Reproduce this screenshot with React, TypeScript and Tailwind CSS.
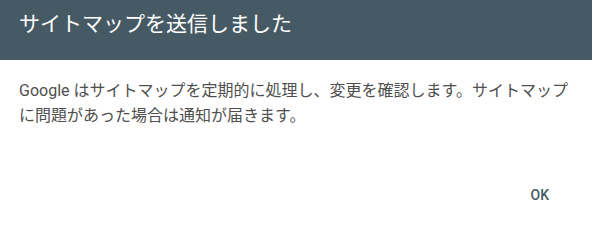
export default function App() {
  return (
    <div
      className="h-[229px] w-[592px] bg-white"
      style={{ fontFamily: 'Roboto, "Noto Sans CJK JP", sans-serif' }}
    >
      <div className="flex h-[60px] items-start bg-[#455a64] px-[19px] pt-[9px]">
        <h1 className="text-[21px] leading-[30px] text-white">サイトマップを送信しました</h1>
      </div>
      <p className="px-[19px] pt-[18px] pr-[20px] text-[16px] leading-[25px] text-[#4f4f4f]">
        Google はサイトマップを定期的に処理し、変更を確認します。サイトマップに問題があった場合は通知が届きます。
      </p>
      <div className="flex justify-end pt-[55px] pr-[35px]">
        <button className="px-2 text-[14px] font-medium leading-[24px] text-[#455a64]">OK</button>
      </div>
    </div>
  );
}
